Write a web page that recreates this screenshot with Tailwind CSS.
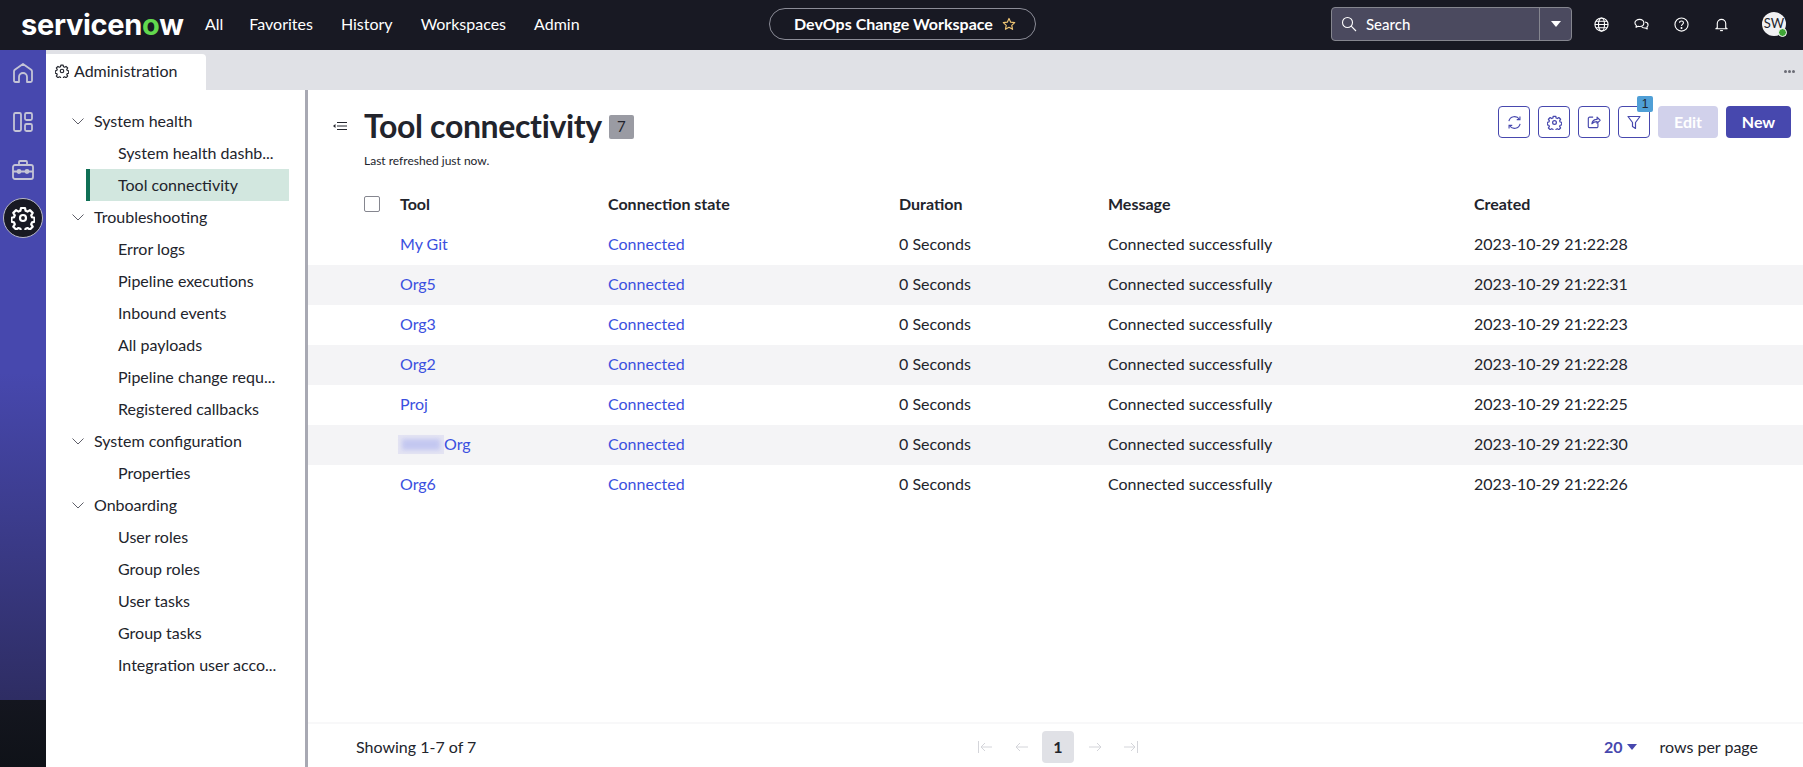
<!DOCTYPE html>
<html lang="en">
<head>
  <meta charset="UTF-8" />
  <title>Tool connectivity</title>
  <script src="https://cdn.jsdelivr.net/npm/@tailwindcss/browser@4"></script>
</head>
<body class="h-screen overflow-hidden flex flex-col bg-white text-[#22242c] font-['Lato',sans-serif] text-[16px]">

  <!-- top bar -->
  <header class="h-[50px] shrink-0 bg-[#181923] flex items-center text-white relative pb-[2px]">
    <div class="ml-[21px] w-[184px] text-[29px] font-bold tracking-[-0.3px] leading-none font-['Inter',sans-serif]">servicen<span class="text-[#62d84e]">o</span>w</div>
    <nav class="flex gap-[28px]">
      <a class="-mr-[2px]">All</a><a>Favorites</a><a>History</a><a>Workspaces</a><a>Admin</a>
    </nav>
    <div class="absolute left-[769px] top-[8px] w-[267px] h-[32px] border border-[#8b8c97] rounded-full flex items-center pl-[24px] gap-[9px] font-bold">
      DevOps Change Workspace
      <svg width="14" height="14" viewBox="0 0 24 24" fill="none" stroke="#f0c674" stroke-width="2" stroke-linejoin="round"><path d="M12 2.500l2.900 6.300 6.900.8-5.100 4.700 1.400 6.800-6.100-3.400-6.100 3.400 1.400-6.800L2.200 9.600l6.900-.8z"/></svg>
    </div>
    <div class="ml-auto flex items-center">
      <div class="w-[241px] h-[34px] bg-[#4b4a5f] border border-[#85868f] rounded-[4px] flex items-center">
        <svg class="ml-[9px]" width="16" height="16" viewBox="0 0 16 16" fill="none" stroke="white" stroke-width="1.100"><circle cx="6.500" cy="6.500" r="5"/><path d="M10.200 10.200L15 15"/></svg>
        <span class="ml-[9px] text-[15px] font-medium">Search</span>
        <div class="ml-auto w-[32px] h-full border-l border-[#85868f] flex items-center justify-center">
          <div class="w-0 h-0 border-l-[5px] border-r-[5px] border-t-[6px] border-l-transparent border-r-transparent border-t-white"></div>
        </div>
      </div>
      <!-- globe -->
      <svg class="ml-[22px]" width="15" height="15" viewBox="0 0 16 16" fill="none" stroke="white" stroke-width="1.200"><circle cx="8" cy="8" r="7"/><ellipse cx="8" cy="8" rx="3.200" ry="7"/><path d="M1 8h14M2 4.500h12M2 11.500h12"/></svg>
      <!-- chat -->
      <svg class="ml-[25px]" width="15" height="15" viewBox="0 0 16 16" fill="none" stroke="white" stroke-width="1.200" stroke-linejoin="round"><path d="M6 2.500c-2.800 0-5 1.600-5 3.700 0 1.100.6 2.100 1.500 2.700L2.200 11l2.300-1.100c.5.100 1 .2 1.500.2 2.800 0 4.500-1.700 4.500-3.800S8.800 2.500 6 2.500z"/><path d="M11.800 5.400c1.900.3 3.200 1.500 3.200 3 0 .9-.5 1.700-1.200 2.300l.3 2-2-1c-1.600.2-3.300-.3-4.100-1.600"/></svg>
      <!-- help -->
      <svg class="ml-[25px]" width="15" height="15" viewBox="0 0 16 16" fill="none" stroke="white" stroke-width="1.200"><circle cx="8" cy="8" r="7"/><path d="M5.900 6.200c0-1.200 1-2 2.100-2s2.100.8 2.100 1.900c0 1.700-2.100 1.700-2.100 3.400"/><circle cx="8" cy="11.700" r=".5" fill="white"/></svg>
      <!-- bell -->
      <svg class="ml-[25px]" width="15" height="15" viewBox="0 0 16 16" fill="none" stroke="white" stroke-width="1.200" stroke-linejoin="round"><path d="M3.500 11.500V7a4.500 4.500 0 0 1 9 0v4.500l1.500 1H2z"/><path d="M6.500 14.500h3"/></svg>
      <div class="ml-[33px] mr-[17px] w-[24px] h-[24px] rounded-full bg-[#f1f1f3] text-[#22242c] text-[13px] flex items-center justify-center relative">SW
        <div class="absolute right-[-1px] bottom-[-1px] w-[9px] h-[9px] rounded-full bg-[#3fa535] border border-white"></div>
      </div>
    </div>
  </header>

  <div class="flex-1 min-h-0 flex">
    <!-- left rail -->
    <aside class="w-[46px] shrink-0 bg-[linear-gradient(to_bottom,#4748ae_45%,#2e2d63_90.7%,#14161f_90.7%,#0f1218_100%)] flex flex-col items-center relative">
      <svg class="mt-[12px]" width="22" height="22" viewBox="0 0 22 22" fill="none" stroke="#c4c4d6" stroke-width="1.800" stroke-linejoin="round"><path d="M2 18.500V9.500q0-1 .8-1.700L11 2l8.200 5.800q.8.700.8 1.700v9q0 1.500-1.500 1.500H15v-5a4 4 0 0 0-8 0v5H3.500Q2 20 2 18.500z"/></svg>
      <svg class="mt-[27px]" width="22" height="22" viewBox="0 0 22 22" fill="none" stroke="#c4c4d6" stroke-width="1.800"><rect x="2" y="2" width="7" height="18" rx="1.500"/><rect x="13" y="2" width="7" height="7" rx="1.500"/><rect x="13" y="13" width="7" height="7" rx="1.500"/></svg>
      <svg class="mt-[26px]" width="24" height="22" viewBox="0 0 24 22" fill="none" stroke="#c4c4d6" stroke-width="1.800"><rect x="2" y="6" width="20" height="14" rx="2"/><path d="M8 6V3a1 1 0 0 1 1-1h6a1 1 0 0 1 1 1v3M2 12.500h20"/><circle cx="8" cy="12.500" r="1.500" fill="#c4c4d6"/><circle cx="16" cy="12.500" r="1.500" fill="#c4c4d6"/></svg>
      <div class="mt-[17px] w-[40px] h-[40px] rounded-full bg-[#181923] border border-[#b8b8c6] flex items-center justify-center">
        <svg width="24" height="24" viewBox="0 0 24 24" fill="none" stroke="white" stroke-width="2.200" stroke-linejoin="round"><circle cx="12" cy="12" r="3"/><path d="M10 2h4l.6 2.800 1.900.8 2.400-1.500 2.800 2.800-1.500 2.400.8 1.900 2.500.6v4l-2.500.6-.8 1.900 1.500 2.400-2.800 2.800-2.400-1.500-1.900.8-.6 2.500h-4l-.6-2.500-1.900-.8-2.400 1.500-2.800-2.800 1.500-2.400-.8-1.900-2.500-.6v-4l2.500-.6.8-1.900-1.500-2.400 2.800-2.800 2.400 1.500 1.900-.8z"/></svg>
      </div>
    </aside>

    <div class="flex-1 min-w-0 flex flex-col">
      <!-- tabs -->
      <div class="h-[40px] shrink-0 bg-[#e0e1e6] flex items-end relative">
        <div class="w-[160px] h-[36px] bg-white rounded-tr-[4px] flex items-center pl-[9px] pb-[2px] gap-[5px]">
          <svg width="14" height="14" viewBox="0 0 24 24" fill="none" stroke="#22242c" stroke-width="2" stroke-linejoin="round"><circle cx="12" cy="12" r="3"/><path d="M10 2h4l.6 2.800 1.900.8 2.400-1.500 2.800 2.800-1.500 2.400.8 1.900 2.500.6v4l-2.500.6-.8 1.900 1.500 2.400-2.800 2.800-2.400-1.500-1.900.8-.6 2.500h-4l-.6-2.500-1.900-.8-2.400 1.500-2.800-2.800 1.500-2.400-.8-1.900-2.500-.6v-4l2.500-.6.8-1.900-1.500-2.400 2.800-2.800 2.400 1.500 1.900-.8z"/></svg>
          Administration
        </div>
        <div class="absolute right-[8px] top-[20px] flex gap-[1px]">
          <i class="w-[3px] h-[3px] rounded-full bg-[#6b6c76]"></i><i class="w-[3px] h-[3px] rounded-full bg-[#6b6c76]"></i><i class="w-[3px] h-[3px] rounded-full bg-[#6b6c76]"></i>
        </div>
      </div>

      <div class="flex-1 min-h-0 flex">
        <!-- tree nav -->
        <div class="w-[262px] shrink-0 border-r-[3px] border-[#a8a9b3] pt-[15px] pl-[40px] pr-[16px]">
          <div class="h-[32px] -ml-[14px] flex items-center gap-[10px]"><svg width="12" height="7" viewBox="0 0 12 7" fill="none" stroke="#5e5f69"><path d="M.5.500L6 6 11.500.500"/></svg>System health</div>
          <div class="h-[32px] flex items-center pl-[32px]">System health dashb...</div>
          <div class="h-[32px] flex items-center pl-[28px] border-l-4 border-[#0f6f55] bg-[#d2e7df]">Tool connectivity</div>
          <div class="h-[32px] -ml-[14px] flex items-center gap-[10px]"><svg width="12" height="7" viewBox="0 0 12 7" fill="none" stroke="#5e5f69"><path d="M.5.500L6 6 11.500.500"/></svg>Troubleshooting</div>
          <div class="h-[32px] flex items-center pl-[32px]">Error logs</div>
          <div class="h-[32px] flex items-center pl-[32px]">Pipeline executions</div>
          <div class="h-[32px] flex items-center pl-[32px]">Inbound events</div>
          <div class="h-[32px] flex items-center pl-[32px]">All payloads</div>
          <div class="h-[32px] flex items-center pl-[32px]">Pipeline change requ...</div>
          <div class="h-[32px] flex items-center pl-[32px]">Registered callbacks</div>
          <div class="h-[32px] -ml-[14px] flex items-center gap-[10px]"><svg width="12" height="7" viewBox="0 0 12 7" fill="none" stroke="#5e5f69"><path d="M.5.500L6 6 11.500.500"/></svg>System configuration</div>
          <div class="h-[32px] flex items-center pl-[32px]">Properties</div>
          <div class="h-[32px] -ml-[14px] flex items-center gap-[10px]"><svg width="12" height="7" viewBox="0 0 12 7" fill="none" stroke="#5e5f69"><path d="M.5.500L6 6 11.500.500"/></svg>Onboarding</div>
          <div class="h-[32px] flex items-center pl-[32px]">User roles</div>
          <div class="h-[32px] flex items-center pl-[32px]">Group roles</div>
          <div class="h-[32px] flex items-center pl-[32px]">User tasks</div>
          <div class="h-[32px] flex items-center pl-[32px]">Group tasks</div>
          <div class="h-[32px] flex items-center pl-[32px]">Integration user acco...</div>
        </div>

        <!-- main -->
        <main class="flex-1 min-w-0 flex flex-col">
          <div class="flex-1 min-h-0">
            <div class="flex pt-[16px] pr-[12px]">
              <svg class="ml-[25px] mt-[16px]" width="14" height="8" viewBox="0 0 14 8" fill="none" stroke="#22242c"><path d="M4 .500h10M4 4h10M4 7.500h10"/><path d="M0 4l2.500-2v4z" fill="#22242c" stroke="none"/></svg>
              <div class="ml-[17px]">
                <div class="flex items-center gap-[7px] h-[40px]">
                  <h1 class="text-[32px] font-bold leading-[40px] tracking-[-0.35px]">Tool connectivity</h1>
                  <span class="mt-[1px] w-[25px] h-[24px] bg-[#9a9ba3] rounded-[2px] flex items-center justify-center text-[15px]">7</span>
                </div>
                <p class="text-[12px] leading-[16px] mt-[7px]">Last refreshed just now.</p>
              </div>
              <div class="ml-auto flex gap-[8px]">
                <button class="w-[32px] h-[32px] border border-[#4748ae] rounded-[4px] flex items-center justify-center">
                  <svg width="15" height="15" viewBox="0 0 16 16" fill="none" stroke="#4748ae" stroke-width="1.200"><path d="M2 6.500A6.200 6.200 0 0 1 13.200 4.500M14 9.500A6.200 6.200 0 0 1 2.800 11.500"/><path d="M13.800 1.500v3.400h-3.400M2.200 14.500v-3.400h3.400"/></svg>
                </button>
                <button class="w-[32px] h-[32px] border border-[#4748ae] rounded-[4px] flex items-center justify-center">
                  <svg width="15" height="15" viewBox="0 0 24 24" fill="none" stroke="#4748ae" stroke-width="2" stroke-linejoin="round"><circle cx="12" cy="12" r="3"/><path d="M10 2h4l.6 2.800 1.900.8 2.400-1.500 2.800 2.800-1.500 2.400.8 1.900 2.500.6v4l-2.500.6-.8 1.900 1.500 2.400-2.800 2.800-2.400-1.500-1.900.8-.6 2.500h-4l-.6-2.500-1.900-.8-2.400 1.500-2.800-2.800 1.500-2.400-.8-1.900-2.500-.6v-4l2.500-.6.8-1.900-1.500-2.400 2.800-2.800 2.400 1.500 1.900-.8z"/></svg>
                </button>
                <button class="w-[32px] h-[32px] border border-[#4748ae] rounded-[4px] flex items-center justify-center">
                  <svg width="14" height="14" viewBox="0 0 16 16" fill="none" stroke="#4748ae" stroke-width="1.300" stroke-linejoin="round"><path d="M7 2.500H3a1.500 1.500 0 0 0-1.500 1.500v9A1.500 1.500 0 0 0 3 14.500h8a1.500 1.500 0 0 0 1.500-1.500V9.500"/><path d="M5.500 10c.5-3 2.500-5 6-5V2.500L15 6l-3.500 3.500V7.500c-2.500 0-4.500.8-6 2.500z"/></svg>
                </button>
                <button class="w-[32px] h-[32px] border border-[#4748ae] rounded-[4px] flex items-center justify-center relative">
                  <svg width="14" height="15" viewBox="0 0 14 15" fill="none" stroke="#4748ae" stroke-width="1.200" stroke-linejoin="round"><path d="M1 1.500h12L8.500 7.500v6l-3-2V7.500z"/></svg>
                  <span class="absolute left-[18px] top-[-11px] w-[16px] h-[16px] bg-[#4f9fd6] rounded-[2px] text-[#22242c] text-[12px] leading-[16px] text-center font-['Liberation_Sans',sans-serif]">1</span>
                </button>
                <button class="w-[60px] h-[32px] bg-[#d1d1eb] text-white font-bold rounded-[4px]">Edit</button>
                <button class="w-[65px] h-[32px] bg-[#4748ae] text-white font-bold rounded-[4px]">New</button>
              </div>
            </div>

            <!-- table -->
            <div class="mt-[16px]">
              <div class="h-[40px] pb-[2px] grid grid-cols-[92px_208px_291px_209px_366px_1fr] items-center font-bold">
                <div class="pl-[56px]"><div class="w-[16px] h-[16px] border border-[#85868f] rounded-[2px]"></div></div>
                <div>Tool</div><div>Connection state</div><div>Duration</div><div>Message</div><div>Created</div>
              </div>
              <div class="h-[40px] pb-[2px] grid grid-cols-[92px_208px_291px_209px_366px_1fr] items-center">
                <div></div><a class="text-[#3b50e0]">My Git</a><a class="text-[#3b50e0]">Connected</a><div>0 Seconds</div><div>Connected successfully</div><div>2023-10-29 21:22:28</div>
              </div>
              <div class="h-[40px] pb-[2px] grid grid-cols-[92px_208px_291px_209px_366px_1fr] items-center bg-[#f4f4f6]">
                <div></div><a class="text-[#3b50e0]">Org5</a><a class="text-[#3b50e0]">Connected</a><div>0 Seconds</div><div>Connected successfully</div><div>2023-10-29 21:22:31</div>
              </div>
              <div class="h-[40px] pb-[2px] grid grid-cols-[92px_208px_291px_209px_366px_1fr] items-center">
                <div></div><a class="text-[#3b50e0]">Org3</a><a class="text-[#3b50e0]">Connected</a><div>0 Seconds</div><div>Connected successfully</div><div>2023-10-29 21:22:23</div>
              </div>
              <div class="h-[40px] pb-[2px] grid grid-cols-[92px_208px_291px_209px_366px_1fr] items-center bg-[#f4f4f6]">
                <div></div><a class="text-[#3b50e0]">Org2</a><a class="text-[#3b50e0]">Connected</a><div>0 Seconds</div><div>Connected successfully</div><div>2023-10-29 21:22:28</div>
              </div>
              <div class="h-[40px] pb-[2px] grid grid-cols-[92px_208px_291px_209px_366px_1fr] items-center">
                <div></div><a class="text-[#3b50e0]">Proj</a><a class="text-[#3b50e0]">Connected</a><div>0 Seconds</div><div>Connected successfully</div><div>2023-10-29 21:22:25</div>
              </div>
              <div class="h-[40px] pb-[2px] grid grid-cols-[92px_208px_291px_209px_366px_1fr] items-center bg-[#f4f4f6]">
                <div></div><a class="text-[#3b50e0] flex items-center"><span class="w-[46px] h-[19px] -ml-[2px] bg-[#e4e4f3] flex items-center justify-center"><span class="block w-[38px] h-[11px] bg-[#c3c7f0] blur-[2px]"></span></span>Org</a><a class="text-[#3b50e0]">Connected</a><div>0 Seconds</div><div>Connected successfully</div><div>2023-10-29 21:22:30</div>
              </div>
              <div class="h-[40px] pb-[2px] grid grid-cols-[92px_208px_291px_209px_366px_1fr] items-center">
                <div></div><a class="text-[#3b50e0]">Org6</a><a class="text-[#3b50e0]">Connected</a><div>0 Seconds</div><div>Connected successfully</div><div>2023-10-29 21:22:26</div>
              </div>
            </div>
          </div>

          <!-- pager -->
          <footer class="h-[45px] shrink-0 border-t-2 border-[#f8f8f9] pt-[3px] grid grid-cols-3 items-center pl-[48px] pr-[45px]">
            <div>Showing 1-7 of 7</div>
            <div class="flex items-center justify-center pl-[2px]">
              <svg width="15" height="12" viewBox="0 0 15 12" fill="none" stroke="#d4d5da"><path d="M.5 0v12M14 6H3M7 2L3 6l4 4"/></svg>
              <svg class="ml-[21px]" width="15" height="12" viewBox="0 0 15 12" fill="none" stroke="#d4d5da"><path d="M14 6H2M6 2L2 6l4 4"/></svg>
              <div class="ml-[13px] w-[32px] h-[32px] bg-[#e0e1e6] rounded-[4px] flex items-center justify-center font-bold">1</div>
              <svg class="ml-[14px]" width="15" height="12" viewBox="0 0 15 12" fill="none" stroke="#d4d5da"><path d="M1 6h12M9 2l4 4-4 4"/></svg>
              <svg class="ml-[20px]" width="15" height="12" viewBox="0 0 15 12" fill="none" stroke="#d4d5da"><path d="M14.500 0v12M1 6h11M8 2l4 4-4 4"/></svg>
            </div>
            <div class="flex items-center justify-end">
              <span class="text-[#4748ae] font-bold">20</span>
              <div class="ml-[5px] w-0 h-0 border-l-[5px] border-r-[5px] border-t-[6px] border-l-transparent border-r-transparent border-t-[#4748ae]"></div>
              <span class="ml-[22px]">rows per page</span>
            </div>
          </footer>
        </main>
      </div>
    </div>
  </div>
</body>
</html>
